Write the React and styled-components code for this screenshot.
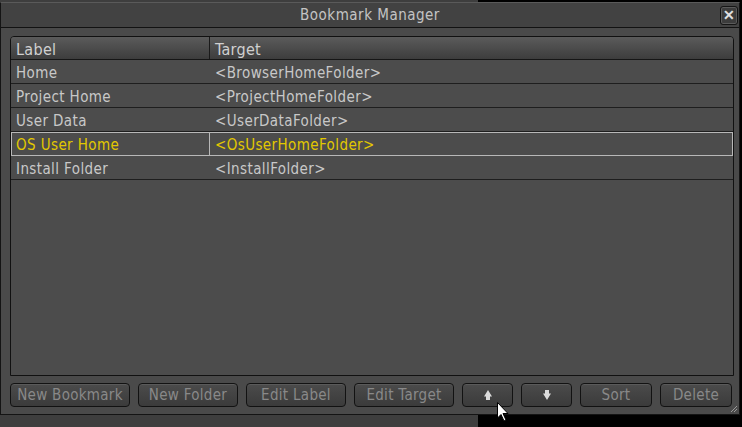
import React from 'react'
import styled, { createGlobalStyle } from 'styled-components'

const GlobalStyle = createGlobalStyle`
  html, body { margin: 0; padding: 0; }
  body {
    width: 742px;
    height: 427px;
    overflow: hidden;
    background: linear-gradient(to right, #3e3e3e 0 478px, #000 478px);
    font-family: "DejaVu Sans Condensed", "Liberation Sans", sans-serif;
  }
`

const Desktop = styled.div`
  position: relative;
  width: 742px;
  height: 427px;
  padding-top: 2px;
  box-sizing: border-box;
`

const Window = styled.div`
  width: 740px;
  height: 413px;
  box-sizing: border-box;
  background: #4a4a4a;
  border: 1px solid #141414;
  border-top-color: #5a5a5a;
  display: flex;
  flex-direction: column;
  position: relative;
`

const TitleBar = styled.div`
  height: 24px;
  background: #424242;
  border-bottom: 1px solid #121212;
  display: grid;
  grid-template-columns: 1fr auto 1fr;
  align-items: center;
  color: #c4c4c4;
  font-size: 15px;
  letter-spacing: 0.5px;
`

const Title = styled.span`
  grid-column: 2;
`

const CloseButton = styled.div`
  grid-column: 3;
  justify-self: end;
  margin-right: 1px;
  width: 16px;
  height: 17px;
  border: 1px solid #151515;
  border-radius: 3px;
  background: #3c3c3c;
  color: #e0e0e0;
  font-family: "Liberation Sans", sans-serif;
  font-weight: bold;
  font-size: 14px;
  display: flex;
  align-items: center;
  justify-content: center;
  box-shadow: inset 0 0 0 1px #5a5a5a;
`

const Body = styled.div`
  flex: 1;
  display: flex;
  flex-direction: column;
  padding: 8px 5px 7px 9px;
  min-height: 0;
`

const Table = styled.div`
  flex: 1;
  background: #4c4c4c;
  border: 1px solid #111;
  border-radius: 4px 4px 0 0;
  overflow: hidden;
  display: flex;
  flex-direction: column;
`

const HeaderRow = styled.div`
  display: grid;
  grid-template-columns: 199px 1fr;
  height: 22px;
  flex-shrink: 0;
  background: linear-gradient(#5b5b5b, #3d3d3d);
  border-bottom: 1px solid #161616;
  color: #d0d0d0;
  font-size: 16px;
  letter-spacing: 0.3px;
`

const HeaderCell = styled.div`
  display: flex;
  align-items: center;
  padding: 2px 0 0 5px;
  ${p => p.$first && 'border-right: 1px solid #1a1a1a;'}
`

const Row = styled.div`
  display: grid;
  grid-template-columns: 199px 1fr;
  height: 24px;
  flex-shrink: 0;
  box-sizing: border-box;
  border-bottom: 1px solid #1e1e1e;
  color: ${p => (p.$selected ? '#e2c800' : '#c8c8c8')};
  font-size: 15px;
  letter-spacing: 0.4px;
  ${p => p.$selected && 'outline: 1px solid #b8b8b8; outline-offset: -1px;'}
`

const Cell = styled.div`
  display: flex;
  align-items: center;
  padding: 2px 0 0 5px;
  white-space: nowrap;
  ${p => p.$first && p.$selected && 'border-right: 1px solid #b8b8b8;'}
`

const ButtonBar = styled.div`
  display: flex;
  gap: 8px;
  margin-top: 7px;
`

const Button = styled.div`
  width: ${p => p.$w}px;
  height: 24px;
  box-sizing: border-box;
  border: 1px solid #121212;
  border-radius: 4px;
  background: linear-gradient(#4b4b4b, #3b3b3b);
  box-shadow: inset 0 1px 0 #5a5a5a;
  color: #898989;
  font-size: 15px;
  letter-spacing: 0.3px;
  display: flex;
  align-items: center;
  justify-content: center;
`

const Grip = styled.svg`
  position: absolute;
  right: 1px;
  bottom: 1px;
`

const Cursor = styled.svg`
  position: absolute;
  left: 497px;
  top: 402px;
`

const rows = [
  ['Home', '<BrowserHomeFolder>'],
  ['Project Home', '<ProjectHomeFolder>'],
  ['User Data', '<UserDataFolder>'],
  ['OS User Home', '<OsUserHomeFolder>'],
  ['Install Folder', '<InstallFolder>'],
]

const Arrow = ({ up }) => (
  <svg width="10" height="12" viewBox="0 0 10 12" style={{ transform: up ? 'none' : 'rotate(180deg)' }}>
    <path d="M5 1 L9 7.5 H7 V11 H3 V7.5 H1 Z" fill="#dcdcdc" />
  </svg>
)

export default function App() {
  return (
    <Desktop>
      <GlobalStyle />
      <Window>
        <TitleBar>
          <Title>Bookmark Manager</Title>
          <CloseButton>✕</CloseButton>
        </TitleBar>
        <Body>
          <Table>
            <HeaderRow>
              <HeaderCell $first>Label</HeaderCell>
              <HeaderCell>Target</HeaderCell>
            </HeaderRow>
            {rows.map(([label, target], i) => (
              <Row key={label} $selected={i === 3}>
                <Cell $first $selected={i === 3}>{label}</Cell>
                <Cell>{target}</Cell>
              </Row>
            ))}
          </Table>
          <ButtonBar>
            <Button $w={120}>New Bookmark</Button>
            <Button $w={100}>New Folder</Button>
            <Button $w={100}>Edit Label</Button>
            <Button $w={100}>Edit Target</Button>
            <Button $w={51}><Arrow up /></Button>
            <Button $w={51}><Arrow /></Button>
            <Button $w={72}>Sort</Button>
            <Button $w={72}>Delete</Button>
          </ButtonBar>
        </Body>
        <Grip width="8" height="8" viewBox="0 0 8 8">
          <path d="M7 1 L1 7 M7 4 L4 7" stroke="#9a9a9a" strokeWidth="1" />
        </Grip>
      </Window>
      <Cursor width="12" height="20" viewBox="0 0 12 20">
        <path d="M0.5 0.5 V16 L4 12.5 L7 19 L9 18 L6 11.5 H11 Z" fill="#fff" stroke="#000" strokeWidth="1" />
      </Cursor>
    </Desktop>
  )
}
